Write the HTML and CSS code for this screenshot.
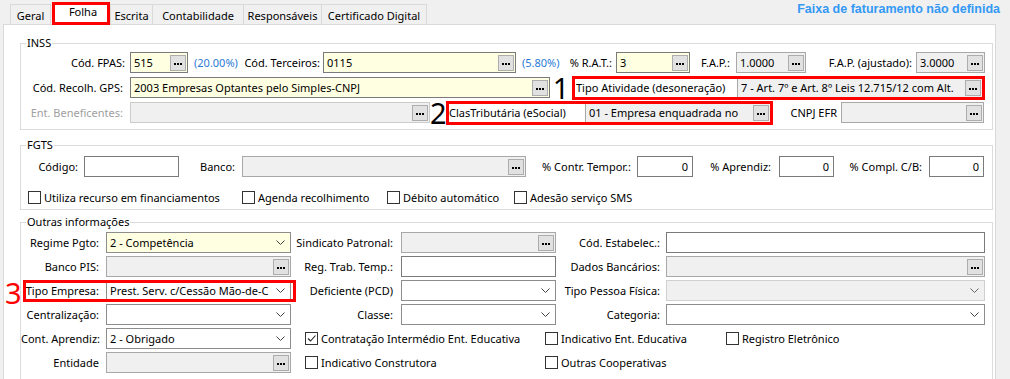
FILE: index.html
```html
<!DOCTYPE html>
<html lang="pt-BR">
<head>
  <meta charset="UTF-8" />
  <title>Empresa - Folha</title>
  <link rel="stylesheet" href="styles.css">
</head>
<body>
  <div class="topbar">
    <div class="tabs">
      <div class="tab t-geral">Geral</div>
      <div class="tab active t-folha">Folha</div>
      <div class="tab t-escrita">Escrita</div>
      <div class="tab t-contab">Contabilidade</div>
      <div class="tab t-resp">Responsáveis</div>
      <div class="tab t-cert">Certificado Digital</div>
    </div>
    <div class="faixa">Faixa de faturamento não definida</div>
  </div>

  <div class="panel">

    <!-- INSS -->
    <fieldset class="group inss">
      <legend>INSS</legend>
      <div class="row">
        <span class="lbl i-fpas">Cód. FPAS:</span>
        <div class="inp yellow i-fpas-in"><span class="val">515</span><b class="more"></b></div>
        <span class="pct i-pct1">(20.00%)</span>
        <span class="lbl i-terc">Cód. Terceiros:</span>
        <div class="inp yellow i-terc-in"><span class="val">0115</span><b class="more"></b></div>
        <span class="pct i-pct2">(5.80%)</span>
        <span class="lbl i-rat">% R.A.T.:</span>
        <div class="inp yellow i-rat-in"><span class="val">3</span><b class="more"></b></div>
        <span class="lbl i-fap">F.A.P.:</span>
        <div class="inp off i-fap-in"><span class="val">1.0000</span><b class="more"></b></div>
        <span class="lbl i-fapaj">F.A.P. (ajustado):</span>
        <div class="inp off i-fapaj-in"><span class="val">3.0000</span><b class="more"></b></div>
      </div>
      <div class="row">
        <span class="lbl i-first">Cód. Recolh. GPS:</span>
        <div class="inp yellow i-gps-in"><span class="val">2003 Empresas Optantes pelo Simples-CNPJ</span><b class="more"></b></div>
        <span class="num i-num1">1</span>
        <div class="mark i-box1">
          <span class="i-tipo">Tipo Atividade (desoneração)</span>
          <div class="inp off boxed"><span class="val">7 - Art. 7º e Art. 8º Leis 12.715/12 com Alt.</span><b class="more"></b></div>
        </div>
      </div>
      <div class="row">
        <span class="lbl i-first muted">Ent. Beneficentes:</span>
        <div class="inp off light i-benef-in"><span class="val"></span><b class="more"></b></div>
        <span class="num i-num2">2</span>
        <div class="mark i-box2">
          <span class="i-clas">ClasTributária (eSocial)</span>
          <div class="inp off boxed"><span class="val">01 - Empresa enquadrada no</span><b class="more"></b></div>
        </div>
        <span class="lbl i-efr">CNPJ EFR</span>
        <div class="inp off i-efr-in"><span class="val"></span><b class="more"></b></div>
      </div>
    </fieldset>

    <!-- FGTS -->
    <fieldset class="group fgts">
      <legend>FGTS</legend>
      <div class="row">
        <span class="lbl f-cod">Código:</span>
        <div class="inp f-cod-in"></div>
        <span class="lbl f-banco">Banco:</span>
        <div class="inp off f-banco-in"><span class="val"></span><b class="more"></b></div>
        <span class="lbl f-temp">% Contr. Tempor.:</span>
        <div class="inp num-in f-temp-in">0</div>
        <span class="lbl f-apr">% Aprendiz:</span>
        <div class="inp num-in f-apr-in">0</div>
        <span class="lbl f-cb">% Compl. C/B:</span>
        <div class="inp num-in f-cb-in">0</div>
      </div>
      <div class="checks fgts-checks">
        <label class="check f-c1"><i class="box"></i>Utiliza recurso em financiamentos</label>
        <label class="check f-c2"><i class="box"></i>Agenda recolhimento</label>
        <label class="check f-c3"><i class="box"></i>Débito automático</label>
        <label class="check"><i class="box"></i>Adesão serviço SMS</label>
      </div>
    </fieldset>

    <!-- Outras informações -->
    <fieldset class="group outras">
      <legend>Outras informações</legend>
      <div class="grid">
        <span class="lbl o-l1">Regime Pgto:</span>
        <div class="combo yellow"><span class="val">2 - Competência</span><svg class="chev" width="9" height="5"><path d="M0.5 0.5l4 4 4-4" fill="none" stroke="#444"/></svg></div>
        <span class="lbl o-l2">Sindicato Patronal:</span>
        <div class="inp off"><span class="val"></span><b class="more"></b></div>
        <span class="lbl o-l3">Cód. Estabelec.:</span>
        <div class="inp"></div>

        <span class="lbl o-l1">Banco PIS:</span>
        <div class="inp off"><span class="val"></span><b class="more"></b></div>
        <span class="lbl o-l2">Reg. Trab. Temp.:</span>
        <div class="inp"></div>
        <span class="lbl o-l3">Dados Bancários:</span>
        <div class="inp off"><span class="val"></span><b class="more"></b></div>

        <span class="lbl o-l1 o-r3a">Tipo Empresa:</span>
        <div class="combo o-r3b"><span class="val">Prest. Serv. c/Cessão Mão-de-C</span><svg class="chev" width="9" height="5"><path d="M0.5 0.5l4 4 4-4" fill="none" stroke="#444"/></svg></div>
        <span class="lbl o-l2">Deficiente (PCD)</span>
        <div class="combo"><span class="val"></span><svg class="chev" width="9" height="5"><path d="M0.5 0.5l4 4 4-4" fill="none" stroke="#444"/></svg></div>
        <span class="lbl o-l3">Tipo Pessoa Física:</span>
        <div class="combo off"><span class="val"></span><svg class="chev" width="9" height="5"><path d="M0.5 0.5l4 4 4-4" fill="none" stroke="#666"/></svg></div>

        <span class="lbl o-l1">Centralização:</span>
        <div class="combo"><span class="val"></span><svg class="chev" width="9" height="5"><path d="M0.5 0.5l4 4 4-4" fill="none" stroke="#444"/></svg></div>
        <span class="lbl o-l2">Classe:</span>
        <div class="combo"><span class="val"></span><svg class="chev" width="9" height="5"><path d="M0.5 0.5l4 4 4-4" fill="none" stroke="#444"/></svg></div>
        <span class="lbl o-l3">Categoria:</span>
        <div class="combo"><span class="val"></span><svg class="chev" width="9" height="5"><path d="M0.5 0.5l4 4 4-4" fill="none" stroke="#444"/></svg></div>

        <span class="lbl o-l1">Cont. Aprendiz:</span>
        <div class="combo"><span class="val">2 - Obrigado</span><svg class="chev" width="9" height="5"><path d="M0.5 0.5l4 4 4-4" fill="none" stroke="#444"/></svg></div>
        <div class="checks o-checks">
          <label class="check o-c1"><i class="box on"><svg width="11" height="11"><path d="M2 5.5l2.5 2.5 5-5.5" fill="none" stroke="#222" stroke-width="1.1"/></svg></i>Contratação Intermédio Ent. Educativa</label>
          <label class="check o-c2"><i class="box"></i>Indicativo Ent. Educativa</label>
          <label class="check"><i class="box"></i>Registro Eletrônico</label>
        </div>

        <span class="lbl o-l1">Entidade</span>
        <div class="inp off"><span class="val"></span><b class="more"></b></div>
        <div class="checks o-checks">
          <label class="check o-c1"><i class="box"></i>Indicativo Construtora</label>
          <label class="check o-c2"><i class="box"></i>Outras Cooperativas</label>
        </div>

        <div class="mark o-box3"><span class="num red">3</span></div>
      </div>
    </fieldset>

  </div>
</body>
</html>
```

FILE: styles.css
```css
body {
  margin: 0;
  background: #f0f0f0;
  font-family: "Noto Sans", sans-serif;
  font-size: 11px;
  color: #000;
  overflow: hidden;
  height: 379px;
}

/* tabs */
.topbar {
  display: flex;
  justify-content: space-between;
  height: 24px;
}

.tabs {
  display: flex;
  align-items: flex-end;
  padding-left: 10px;
}

.tab {
  height: 20px;
  box-sizing: border-box;
  border: 1px solid #d9d9d9;
  border-bottom: none;
  background: #f0f0f0;
  display: flex;
  align-items: center;
  justify-content: center;
  padding-top: 1px;
  white-space: nowrap;
}

.tab.active {
  height: 23px;
  margin-bottom: -1px;
  border: 3px solid #f00;
  background: #fff;
  padding: 0 0 4px 4px;
  position: relative;
  z-index: 1;
}

.t-geral { width: 41px; }
.t-folha { width: 58px; margin-left: 1px; }
.t-escrita { width: 43px; }
.t-contab { width: 92px; margin-left: -1px; }
.t-resp { width: 79px; margin-left: -1px; }
.t-cert { width: 106px; margin-left: -1px; }

.faixa {
  color: #3399f5;
  font-family: "Liberation Sans", sans-serif;
  font-weight: bold;
  font-size: 12.5px;
  padding: 2px 10px 0 0;
}

/* panel and group boxes */
.panel {
  margin-left: 3px;
  width: 993px;
  height: 355px;
  box-sizing: border-box;
  background: #fff;
  border: 1px solid #d9d9d9;
  border-bottom: none;
  padding-top: 10px;
  overflow: hidden;
}

.group {
  margin: 0 2px 0 16px;
  padding: 1px 0 0 0;
  border: 1px solid #dcdcdc;
  min-width: 0;
}

.group legend {
  margin-left: 5px;
  padding: 0 1px;
  line-height: 16px;
}

.inss { padding-bottom: 6px; }
.fgts { margin-top: 7px; padding: 3px 0 4px; }
.outras { margin-top: 4px; padding-top: 2px; height: 200px; }

.row {
  display: flex;
  align-items: center;
  height: 21px;
}

.row + .row { margin-top: 4px; }

.lbl {
  box-sizing: border-box;
  text-align: right;
  white-space: nowrap;
  flex-shrink: 0;
}

.muted { color: #a0a0a0; }

.pct {
  color: #2b7bd6;
  box-sizing: border-box;
  white-space: nowrap;
  flex-shrink: 0;
}

/* inputs */
.inp,
.combo {
  height: 21px;
  box-sizing: border-box;
  border: 1px solid #7a7a7a;
  background: #fff;
  display: flex;
  align-items: center;
  padding: 0 1px 0 3px;
  flex-shrink: 0;
  white-space: nowrap;
  overflow: hidden;
}

.combo { border-color: #8d8d8d; padding-right: 5px; }

.yellow { background: #ffffe1; }
.off { background: #f0f0f0; border-color: #a8a8a8; }
.light { border-color: #cccccc; }
.combo.off { border-color: #d0d0d0; }

.val {
  flex: 1;
  overflow: hidden;
  white-space: nowrap;
}

.num-in { justify-content: flex-end; padding-right: 4px; }

.more {
  width: 16px;
  height: 16px;
  box-sizing: border-box;
  background: #e1e1e1;
  border: 1px solid #adadad;
  display: flex;
  align-items: center;
  justify-content: center;
  flex-shrink: 0;
  padding: 3px 6px 0 0;
}

.more::before {
  content: "";
  width: 2px;
  height: 2px;
  background: #000;
  box-shadow: 3px 0 #000, 6px 0 #000;
}

/* annotations */
.mark {
  box-sizing: border-box;
  border: 3px solid #f00;
  height: 24px;
  display: flex;
  align-items: center;
  flex-shrink: 0;
}

.mark .boxed {
  flex: 1;
  height: 100%;
  border-top: none;
  border-right: none;
  border-bottom: none;
}

.num {
  font-size: 29px;
  line-height: 21px;
  text-align: center;
  flex-shrink: 0;
}

.num.red { color: #f00; }

/* INSS widths */
.i-fpas { width: 109px; padding-right: 5px; }
.i-fpas-in { width: 58px; }
.i-pct1 { width: 52px; padding-left: 6px; }
.i-terc { width: 83px; padding-right: 3px; }
.i-terc-in { width: 193px; }
.i-pct2 { width: 47px; padding-left: 6px; }
.i-rat { width: 53px; padding-right: 4px; }
.i-rat-in { width: 74px; }
.i-fap { width: 46px; padding-right: 6px; }
.i-fap-in { width: 70px; }
.i-fapaj { width: 110px; padding-right: 4px; }
.i-fapaj-in { width: 69px; }

.i-first { width: 109px; padding-right: 7px; }
.i-gps-in { width: 420px; }
.i-num1 { width: 22px; }
.i-box1 { width: 413px; }
.i-tipo { width: 161px; padding-left: 1px; white-space: nowrap; }
.i-benef-in { width: 300px; }
.i-num2 { width: 16px; }
.i-box2 { width: 327px; }
.i-clas { width: 136px; white-space: nowrap; }
.i-efr { width: 68px; padding-right: 4px; }
.i-efr-in { width: 143px; }

/* FGTS widths */
.f-cod { width: 63px; padding-right: 6px; }
.f-cod-in { width: 95px; }
.f-banco { width: 63px; padding-right: 7px; }
.f-banco-in { width: 284px; }
.f-temp { width: 111px; padding-right: 6px; }
.f-temp-in { width: 56px; }
.f-apr { width: 86px; padding-right: 8px; }
.f-apr-in { width: 55px; }
.f-cb { width: 95px; padding-right: 7px; }
.f-cb-in { width: 55px; }

/* checkboxes */
.checks {
  display: flex;
  align-items: center;
  height: 16px;
}

.fgts-checks { margin-top: 12px; padding-left: 7px; }

.check {
  display: flex;
  align-items: center;
  gap: 3px;
  white-space: nowrap;
  flex-shrink: 0;
}

.box {
  width: 13px;
  height: 13px;
  box-sizing: border-box;
  border: 1px solid #333;
  background: #fff;
  display: flex;
  align-items: center;
  justify-content: center;
}

.f-c1 { width: 214px; }
.f-c2 { width: 145px; }
.f-c3 { width: 127px; }

/* Outras informações grid */
.grid {
  display: grid;
  grid-template-columns: 85px 185px 110px 155px 110px 319px;
  grid-auto-rows: 21px;
  row-gap: 3px;
  align-items: center;
}

.grid > .inp,
.grid > .combo { width: 100%; }

.o-l1 { padding-right: 7px; }
.o-l2 { padding-right: 8px; }
.o-l3 { padding-right: 6px; }

.o-r3a { grid-row: 3; grid-column: 1; }
.o-r3b { grid-row: 3; grid-column: 2; }

.o-checks {
  grid-column: 3 / 7;
  height: 21px;
  padding-left: 14px;
}

.o-c1 { width: 240px; }
.o-c2 { width: 181px; }

.o-box3 {
  grid-column: 1 / 3;
  grid-row: 3;
  height: 22px;
  margin: 0 -5px 0 2px;
  position: relative;
}

.o-box3 .num {
  position: absolute;
  left: -21px;
  top: -1px;
}
```
